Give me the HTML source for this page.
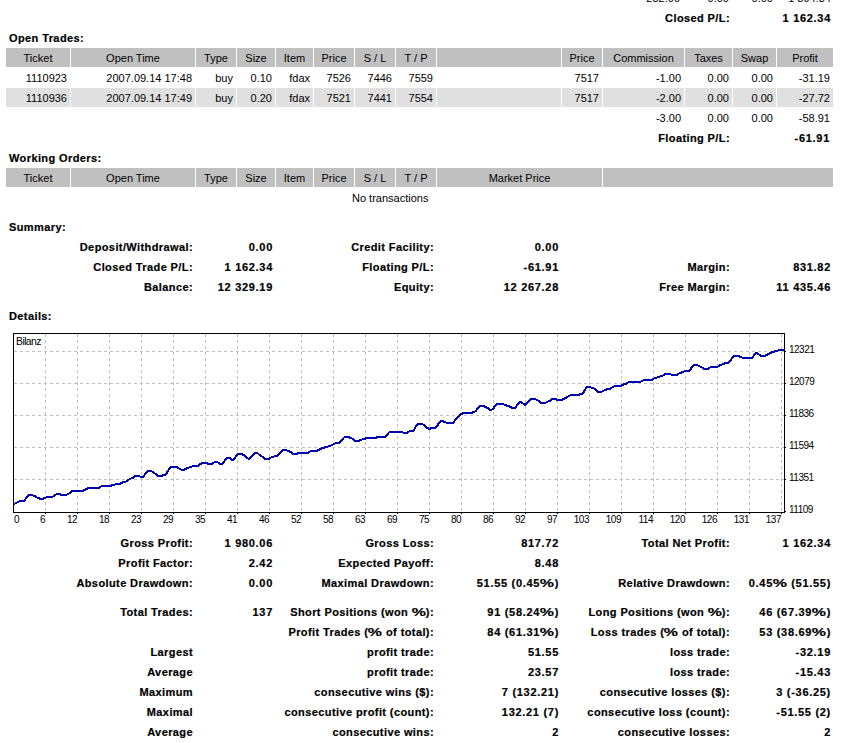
<!DOCTYPE html>
<html><head><meta charset="utf-8"><style>
html,body{margin:0;padding:0;background:#fff;}
body{width:842px;height:743px;overflow:hidden;position:relative;font-family:"Liberation Sans",sans-serif;font-size:11px;color:#000;}
.t{position:absolute;white-space:nowrap;line-height:19px;height:19px;margin-top:1px;}
.r{text-align:right;}
.c{text-align:center;}
b,.b{font-weight:bold;letter-spacing:0.4px;-webkit-text-stroke:0.2px #000;}
.n{letter-spacing:0.7px;}
table.g{position:absolute;left:5px;border-collapse:separate;border-spacing:1px;table-layout:fixed;}
table.g td{height:19px;padding:1px 3px 0 0;line-height:18px;box-sizing:border-box;white-space:nowrap;overflow:hidden;text-align:right;}
table.g tr.h td{background:#c0c0c0;text-align:center;padding:0;}
table.g tr.z td{background:#e0e0e0;}
.ch{position:absolute;left:0;top:326px;}
</style></head><body>

<div class="t r" style="left:598px;width:82px;top:-12px">-232.00</div>
<div class="t r" style="left:685px;width:44px;top:-12px">0.00</div>
<div class="t r" style="left:733px;width:40px;top:-12px">0.00</div>
<div class="t r" style="left:777px;width:54px;top:-12px">1 394.34</div>
<div class="t r b" style="left:501px;width:229px;top:8px">Closed P/L:</div>
<div class="t r b n" style="left:734px;width:97px;top:8px">1 162.34</div>
<div class="t b" style="left:9px;top:28px">Open Trades:</div>
<table class="g" style="top:47px;width:829px"><colgroup><col style="width:64px"><col style="width:124px"><col style="width:40px"><col style="width:38px"><col style="width:37px"><col style="width:40px"><col style="width:40px"><col style="width:40px"><col style="width:124px"><col style="width:40px"><col style="width:81px"><col style="width:47px"><col style="width:43px"><col style="width:56px"></colgroup>
<tr class="h"><td>Ticket</td><td>Open Time</td><td>Type</td><td>Size</td><td>Item</td><td>Price</td><td>S / L</td><td>T / P</td><td></td><td>Price</td><td>Commission</td><td>Taxes</td><td>Swap</td><td>Profit</td></tr>
<tr><td>1110923</td><td>2007.09.14 17:48</td><td>buy</td><td>0.10</td><td>fdax</td><td>7526</td><td>7446</td><td>7559</td><td></td><td>7517</td><td>-1.00</td><td>0.00</td><td>0.00</td><td>-31.19</td></tr>
<tr class="z"><td>1110936</td><td>2007.09.14 17:49</td><td>buy</td><td>0.20</td><td>fdax</td><td>7521</td><td>7441</td><td>7554</td><td></td><td>7517</td><td>-2.00</td><td>0.00</td><td>0.00</td><td>-27.72</td></tr>
<tr><td colspan="10"></td><td>-3.00</td><td>0.00</td><td>0.00</td><td>-58.91</td></tr>
<tr><td colspan="12" style="padding-right:2px"><b>Floating P/L:</b></td><td colspan="2"><b class="n">-61.91</b></td></tr>
</table>
<div class="t b" style="left:9px;top:148px">Working Orders:</div>
<table class="g" style="top:167px;width:829px"><colgroup><col style="width:64px"><col style="width:124px"><col style="width:40px"><col style="width:38px"><col style="width:37px"><col style="width:40px"><col style="width:40px"><col style="width:40px"><col style="width:165px"><col style="width:230px"></colgroup>
<tr class="h"><td>Ticket</td><td>Open Time</td><td>Type</td><td>Size</td><td>Item</td><td>Price</td><td>S / L</td><td>T / P</td><td>Market Price</td><td></td></tr>
</table>
<div class="t" style="left:352px;top:188px">No transactions</div>
<div class="t b" style="left:9px;top:217px">Summary:</div>
<div class="t r b" style="left:43px;width:150px;top:237px">Deposit/Withdrawal:</div>
<div class="t r b n" style="left:203px;width:70px;top:237px">0.00</div>
<div class="t r b" style="left:284px;width:150px;top:237px">Credit Facility:</div>
<div class="t r b n" style="left:449px;width:110px;top:237px">0.00</div>
<div class="t r b" style="left:43px;width:150px;top:257px">Closed Trade P/L:</div>
<div class="t r b n" style="left:203px;width:70px;top:257px">1 162.34</div>
<div class="t r b" style="left:284px;width:150px;top:257px">Floating P/L:</div>
<div class="t r b n" style="left:449px;width:110px;top:257px">-61.91</div>
<div class="t r b" style="left:580px;width:150px;top:257px">Margin:</div>
<div class="t r b n" style="left:741px;width:90px;top:257px">831.82</div>
<div class="t r b" style="left:43px;width:150px;top:277px">Balance:</div>
<div class="t r b n" style="left:203px;width:70px;top:277px">12 329.19</div>
<div class="t r b" style="left:284px;width:150px;top:277px">Equity:</div>
<div class="t r b n" style="left:449px;width:110px;top:277px">12 267.28</div>
<div class="t r b" style="left:580px;width:150px;top:277px">Free Margin:</div>
<div class="t r b n" style="left:741px;width:90px;top:277px">11 435.46</div>
<div class="t b" style="left:9px;top:306px">Details:</div>
<svg class="ch" width="842" height="207" viewBox="0 326 842 207" style="position:absolute;left:0;top:326px" shape-rendering="crispEdges"><line x1="14" y1="351.5" x2="784" y2="351.5" stroke="#c0c0c0" stroke-width="1" stroke-dasharray="3,3"/><line x1="14" y1="383.5" x2="784" y2="383.5" stroke="#c0c0c0" stroke-width="1" stroke-dasharray="3,3"/><line x1="14" y1="415.5" x2="784" y2="415.5" stroke="#c0c0c0" stroke-width="1" stroke-dasharray="3,3"/><line x1="14" y1="447.5" x2="784" y2="447.5" stroke="#c0c0c0" stroke-width="1" stroke-dasharray="3,3"/><line x1="14" y1="479.5" x2="784" y2="479.5" stroke="#c0c0c0" stroke-width="1" stroke-dasharray="3,3"/><line x1="45.5" y1="334" x2="45.5" y2="512" stroke="#c0c0c0" stroke-width="1" stroke-dasharray="3,3"/><line x1="77.5" y1="334" x2="77.5" y2="512" stroke="#c0c0c0" stroke-width="1" stroke-dasharray="3,3"/><line x1="109.5" y1="334" x2="109.5" y2="512" stroke="#c0c0c0" stroke-width="1" stroke-dasharray="3,3"/><line x1="141.5" y1="334" x2="141.5" y2="512" stroke="#c0c0c0" stroke-width="1" stroke-dasharray="3,3"/><line x1="173.5" y1="334" x2="173.5" y2="512" stroke="#c0c0c0" stroke-width="1" stroke-dasharray="3,3"/><line x1="205.5" y1="334" x2="205.5" y2="512" stroke="#c0c0c0" stroke-width="1" stroke-dasharray="3,3"/><line x1="237.5" y1="334" x2="237.5" y2="512" stroke="#c0c0c0" stroke-width="1" stroke-dasharray="3,3"/><line x1="269.5" y1="334" x2="269.5" y2="512" stroke="#c0c0c0" stroke-width="1" stroke-dasharray="3,3"/><line x1="301.5" y1="334" x2="301.5" y2="512" stroke="#c0c0c0" stroke-width="1" stroke-dasharray="3,3"/><line x1="333.5" y1="334" x2="333.5" y2="512" stroke="#c0c0c0" stroke-width="1" stroke-dasharray="3,3"/><line x1="365.5" y1="334" x2="365.5" y2="512" stroke="#c0c0c0" stroke-width="1" stroke-dasharray="3,3"/><line x1="397.5" y1="334" x2="397.5" y2="512" stroke="#c0c0c0" stroke-width="1" stroke-dasharray="3,3"/><line x1="429.5" y1="334" x2="429.5" y2="512" stroke="#c0c0c0" stroke-width="1" stroke-dasharray="3,3"/><line x1="461.5" y1="334" x2="461.5" y2="512" stroke="#c0c0c0" stroke-width="1" stroke-dasharray="3,3"/><line x1="493.5" y1="334" x2="493.5" y2="512" stroke="#c0c0c0" stroke-width="1" stroke-dasharray="3,3"/><line x1="525.5" y1="334" x2="525.5" y2="512" stroke="#c0c0c0" stroke-width="1" stroke-dasharray="3,3"/><line x1="557.5" y1="334" x2="557.5" y2="512" stroke="#c0c0c0" stroke-width="1" stroke-dasharray="3,3"/><line x1="589.5" y1="334" x2="589.5" y2="512" stroke="#c0c0c0" stroke-width="1" stroke-dasharray="3,3"/><line x1="621.5" y1="334" x2="621.5" y2="512" stroke="#c0c0c0" stroke-width="1" stroke-dasharray="3,3"/><line x1="653.5" y1="334" x2="653.5" y2="512" stroke="#c0c0c0" stroke-width="1" stroke-dasharray="3,3"/><line x1="685.5" y1="334" x2="685.5" y2="512" stroke="#c0c0c0" stroke-width="1" stroke-dasharray="3,3"/><line x1="717.5" y1="334" x2="717.5" y2="512" stroke="#c0c0c0" stroke-width="1" stroke-dasharray="3,3"/><line x1="749.5" y1="334" x2="749.5" y2="512" stroke="#c0c0c0" stroke-width="1" stroke-dasharray="3,3"/><line x1="781.5" y1="334" x2="781.5" y2="512" stroke="#c0c0c0" stroke-width="1" stroke-dasharray="3,3"/><rect x="13.5" y="333.5" width="771" height="179" fill="none" stroke="#000" stroke-width="1"/><line x1="785" y1="351.5" x2="786" y2="351.5" stroke="#000" stroke-width="1"/><line x1="785" y1="383.5" x2="786" y2="383.5" stroke="#000" stroke-width="1"/><line x1="785" y1="415.5" x2="786" y2="415.5" stroke="#000" stroke-width="1"/><line x1="785" y1="447.5" x2="786" y2="447.5" stroke="#000" stroke-width="1"/><line x1="785" y1="479.5" x2="786" y2="479.5" stroke="#000" stroke-width="1"/><line x1="785" y1="511.5" x2="786" y2="511.5" stroke="#000" stroke-width="1"/><line x1="45.5" y1="513" x2="45.5" y2="514" stroke="#000" stroke-width="1"/><line x1="77.5" y1="513" x2="77.5" y2="514" stroke="#000" stroke-width="1"/><line x1="109.5" y1="513" x2="109.5" y2="514" stroke="#000" stroke-width="1"/><line x1="141.5" y1="513" x2="141.5" y2="514" stroke="#000" stroke-width="1"/><line x1="173.5" y1="513" x2="173.5" y2="514" stroke="#000" stroke-width="1"/><line x1="205.5" y1="513" x2="205.5" y2="514" stroke="#000" stroke-width="1"/><line x1="237.5" y1="513" x2="237.5" y2="514" stroke="#000" stroke-width="1"/><line x1="269.5" y1="513" x2="269.5" y2="514" stroke="#000" stroke-width="1"/><line x1="301.5" y1="513" x2="301.5" y2="514" stroke="#000" stroke-width="1"/><line x1="333.5" y1="513" x2="333.5" y2="514" stroke="#000" stroke-width="1"/><line x1="365.5" y1="513" x2="365.5" y2="514" stroke="#000" stroke-width="1"/><line x1="397.5" y1="513" x2="397.5" y2="514" stroke="#000" stroke-width="1"/><line x1="429.5" y1="513" x2="429.5" y2="514" stroke="#000" stroke-width="1"/><line x1="461.5" y1="513" x2="461.5" y2="514" stroke="#000" stroke-width="1"/><line x1="493.5" y1="513" x2="493.5" y2="514" stroke="#000" stroke-width="1"/><line x1="525.5" y1="513" x2="525.5" y2="514" stroke="#000" stroke-width="1"/><line x1="557.5" y1="513" x2="557.5" y2="514" stroke="#000" stroke-width="1"/><line x1="589.5" y1="513" x2="589.5" y2="514" stroke="#000" stroke-width="1"/><line x1="621.5" y1="513" x2="621.5" y2="514" stroke="#000" stroke-width="1"/><line x1="653.5" y1="513" x2="653.5" y2="514" stroke="#000" stroke-width="1"/><line x1="685.5" y1="513" x2="685.5" y2="514" stroke="#000" stroke-width="1"/><line x1="717.5" y1="513" x2="717.5" y2="514" stroke="#000" stroke-width="1"/><line x1="749.5" y1="513" x2="749.5" y2="514" stroke="#000" stroke-width="1"/><line x1="781.5" y1="513" x2="781.5" y2="514" stroke="#000" stroke-width="1"/><polyline points="14.1,503.9 16.2,503.0 18.7,501.7 21.6,500.8 24.4,500.7 26.5,497.1 29.0,495.0 31.9,495.0 34.4,496.0 37.2,497.5 40.1,498.9 42.9,498.9 45.1,497.7 47.2,497.0 52.2,497.0 55.8,494.6 59.3,493.9 61.5,495.0 65.7,495.0 68.6,493.7 72.9,490.7 83.0,490.8 86.9,488.9 89.0,487.8 99.4,487.8 101.5,486.0 110.8,486.0 112.9,484.8 120.0,483.9 122.9,482.1 126.5,481.4 128.6,479.6 132.9,477.8 134.8,475.8 139.1,475.8 140.1,476.7 143.3,476.7 145.8,472.8 148.0,470.8 150.5,470.8 153.0,472.1 155.8,473.9 158.0,475.7 162.2,475.7 163.6,474.6 165.8,474.6 167.9,471.0 170.1,467.8 171.8,466.8 176.5,466.8 178.6,468.2 181.5,469.8 184.3,469.8 185.7,468.9 187.9,468.0 190.7,466.8 194.1,465.8 198.0,465.8 200.1,464.2 203.0,462.8 207.3,462.8 208.3,463.9 212.2,463.9 214.4,462.1 217.6,462.1 220.1,463.9 222.6,463.9 225.1,460.0 227.2,457.8 229.7,457.8 231.8,459.8 233.6,459.8 235.8,456.4 237.9,453.9 241.5,453.9 243.6,455.0 247.2,458.2 249.7,458.9 253.0,454.6 255.1,452.8 257.3,452.8 259.4,454.8 262.3,456.7 264.8,458.9 269.0,458.9 270.1,457.8 273.0,457.0 275.1,455.8 277.2,455.8 280.1,452.8 282.9,450.0 286.1,450.0 287.9,450.8 290.4,451.8 292.6,453.9 297.2,453.9 298.3,452.8 307.9,452.8 309.3,451.8 313.0,450.7 317.3,450.8 320.1,448.9 327.3,446.7 332.2,445.0 336.5,442.8 339.4,442.8 342.2,439.6 344.7,436.8 348.6,436.8 350.1,437.8 352.9,438.9 355.1,440.8 359.3,440.8 360.8,439.8 365.0,438.9 366.1,437.8 373.0,437.8 375.9,437.8 376.9,436.7 385.1,436.7 387.3,434.6 389.7,431.7 393.3,431.7 407.2,432.8 408.6,431.7 410.8,430.8 413.6,430.8 415.0,427.8 417.5,423.9 421.5,423.9 424.3,425.0 427.2,427.8 429.3,428.9 433.0,427.8 435.1,427.8 437.3,425.7 439.4,422.1 441.2,421.0 443.3,421.0 444.4,422.0 446.5,422.8 453.3,422.8 455.8,418.9 458.7,416.0 461.5,413.9 464.4,412.8 471.8,412.8 472.9,411.8 475.8,411.4 477.9,407.8 480.0,406.1 483.6,406.1 485.7,407.1 488.2,408.2 490.0,410.0 493.0,409.3 494.8,405.7 496.9,403.9 503.0,403.9 505.1,405.0 507.3,405.8 510.1,406.7 512.2,408.0 515.1,408.0 517.2,405.0 520.1,401.7 522.9,403.5 525.4,405.0 527.9,402.5 530.8,398.9 534.3,398.9 536.5,399.8 539.3,401.0 541.1,402.8 545.4,402.8 547.2,401.7 550.0,400.7 552.2,398.5 555.9,398.9 557.3,399.9 562.3,399.9 563.3,398.9 565.8,398.0 569.0,395.8 571.5,394.8 579.0,394.8 580.1,393.9 582.9,393.5 584.4,390.8 586.9,387.1 590.4,387.1 591.5,387.8 593.6,388.2 595.8,390.0 597.9,391.9 601.5,391.9 602.9,390.8 605.7,389.8 607.9,388.9 610.0,388.9 613.0,386.8 615.5,385.8 620.8,385.8 622.3,384.8 625.8,383.9 629.4,381.7 640.8,381.7 642.2,380.7 645.1,379.8 652.2,379.8 653.6,378.7 655.8,377.8 659.3,376.7 662.9,375.7 665.4,373.9 669.3,373.9 673.0,375.0 676.9,375.0 678.0,373.9 680.8,372.8 683.7,371.7 686.5,370.8 689.4,370.8 691.5,367.8 693.7,365.0 697.2,365.0 698.3,365.8 700.8,366.7 704.4,368.9 708.3,368.9 709.4,367.8 711.8,366.9 717.2,366.9 720.8,364.8 724.3,363.9 725.7,362.8 728.6,362.8 730.7,360.0 733.7,356.0 738.7,356.0 740.1,357.0 743.0,357.8 752.2,357.8 754.4,354.6 756.5,352.8 758.3,353.9 760.8,355.8 765.1,355.8 766.5,354.8 769.3,353.9 770.8,352.8 773.6,351.8 777.2,350.7 780.7,349.6 784.0,349.6" fill="none" stroke="#0000b0" stroke-width="2" stroke-linejoin="round" shape-rendering="crispEdges"/></svg>
<div class="t" style="left:16px;top:331px;font-size:10.5px;letter-spacing:-0.6px">Bilanz</div>
<div class="t" style="left:789px;top:339px;font-size:10px;letter-spacing:-0.5px">12321</div>
<div class="t" style="left:789px;top:371px;font-size:10px;letter-spacing:-0.5px">12079</div>
<div class="t" style="left:789px;top:403px;font-size:10px;letter-spacing:-0.5px">11836</div>
<div class="t" style="left:789px;top:435px;font-size:10px;letter-spacing:-0.5px">11594</div>
<div class="t" style="left:789px;top:467px;font-size:10px;letter-spacing:-0.5px">11351</div>
<div class="t" style="left:789px;top:499px;font-size:10px;letter-spacing:-0.5px">11109</div>
<div class="t" style="left:14px;top:509px;font-size:10px">0</div>
<div class="t r" style="left:5px;width:40px;top:509px;font-size:10px;letter-spacing:-0.5px">6</div>
<div class="t r" style="left:37px;width:40px;top:509px;font-size:10px;letter-spacing:-0.5px">12</div>
<div class="t r" style="left:69px;width:40px;top:509px;font-size:10px;letter-spacing:-0.5px">18</div>
<div class="t r" style="left:101px;width:40px;top:509px;font-size:10px;letter-spacing:-0.5px">23</div>
<div class="t r" style="left:133px;width:40px;top:509px;font-size:10px;letter-spacing:-0.5px">29</div>
<div class="t r" style="left:165px;width:40px;top:509px;font-size:10px;letter-spacing:-0.5px">35</div>
<div class="t r" style="left:197px;width:40px;top:509px;font-size:10px;letter-spacing:-0.5px">41</div>
<div class="t r" style="left:229px;width:40px;top:509px;font-size:10px;letter-spacing:-0.5px">46</div>
<div class="t r" style="left:261px;width:40px;top:509px;font-size:10px;letter-spacing:-0.5px">52</div>
<div class="t r" style="left:293px;width:40px;top:509px;font-size:10px;letter-spacing:-0.5px">58</div>
<div class="t r" style="left:325px;width:40px;top:509px;font-size:10px;letter-spacing:-0.5px">63</div>
<div class="t r" style="left:357px;width:40px;top:509px;font-size:10px;letter-spacing:-0.5px">69</div>
<div class="t r" style="left:389px;width:40px;top:509px;font-size:10px;letter-spacing:-0.5px">75</div>
<div class="t r" style="left:421px;width:40px;top:509px;font-size:10px;letter-spacing:-0.5px">80</div>
<div class="t r" style="left:453px;width:40px;top:509px;font-size:10px;letter-spacing:-0.5px">86</div>
<div class="t r" style="left:485px;width:40px;top:509px;font-size:10px;letter-spacing:-0.5px">92</div>
<div class="t r" style="left:517px;width:40px;top:509px;font-size:10px;letter-spacing:-0.5px">97</div>
<div class="t r" style="left:549px;width:40px;top:509px;font-size:10px;letter-spacing:-0.5px">103</div>
<div class="t r" style="left:581px;width:40px;top:509px;font-size:10px;letter-spacing:-0.5px">109</div>
<div class="t r" style="left:613px;width:40px;top:509px;font-size:10px;letter-spacing:-0.5px">114</div>
<div class="t r" style="left:645px;width:40px;top:509px;font-size:10px;letter-spacing:-0.5px">120</div>
<div class="t r" style="left:677px;width:40px;top:509px;font-size:10px;letter-spacing:-0.5px">126</div>
<div class="t r" style="left:709px;width:40px;top:509px;font-size:10px;letter-spacing:-0.5px">131</div>
<div class="t r" style="left:741px;width:40px;top:509px;font-size:10px;letter-spacing:-0.5px">137</div>
<div class="t r b" style="left:43px;width:150px;top:533px">Gross Profit:</div>
<div class="t r b n" style="left:203px;width:70px;top:533px">1 980.06</div>
<div class="t r b" style="left:284px;width:150px;top:533px">Gross Loss:</div>
<div class="t r b n" style="left:449px;width:110px;top:533px">817.72</div>
<div class="t r b" style="left:580px;width:150px;top:533px">Total Net Profit:</div>
<div class="t r b n" style="left:741px;width:90px;top:533px">1 162.34</div>
<div class="t r b" style="left:43px;width:150px;top:553px">Profit Factor:</div>
<div class="t r b n" style="left:203px;width:70px;top:553px">2.42</div>
<div class="t r b" style="left:284px;width:150px;top:553px">Expected Payoff:</div>
<div class="t r b n" style="left:449px;width:110px;top:553px">8.48</div>
<div class="t r b" style="left:43px;width:150px;top:573px">Absolute Drawdown:</div>
<div class="t r b n" style="left:203px;width:70px;top:573px">0.00</div>
<div class="t r b" style="left:284px;width:150px;top:573px">Maximal Drawdown:</div>
<div class="t r b n" style="left:449px;width:110px;top:573px">51.55 (0.45<span style="display:inline-block;margin:0 2px;transform:scaleX(1.45)">%</span>)</div>
<div class="t r b" style="left:580px;width:150px;top:573px">Relative Drawdown:</div>
<div class="t r b n" style="left:741px;width:90px;top:573px">0.45<span style="display:inline-block;margin:0 2px;transform:scaleX(1.45)">%</span> (51.55)</div>
<div class="t r b" style="left:43px;width:150px;top:602px">Total Trades:</div>
<div class="t r b n" style="left:203px;width:70px;top:602px">137</div>
<div class="t r b" style="left:284px;width:150px;top:602px">Short Positions (won <span style="display:inline-block;margin:0 2px;transform:scaleX(1.45)">%</span>):</div>
<div class="t r b n" style="left:449px;width:110px;top:602px">91 (58.24<span style="display:inline-block;margin:0 2px;transform:scaleX(1.45)">%</span>)</div>
<div class="t r b" style="left:580px;width:150px;top:602px">Long Positions (won <span style="display:inline-block;margin:0 2px;transform:scaleX(1.45)">%</span>):</div>
<div class="t r b n" style="left:741px;width:90px;top:602px">46 (67.39<span style="display:inline-block;margin:0 2px;transform:scaleX(1.45)">%</span>)</div>
<div class="t r b" style="left:284px;width:150px;top:622px">Profit Trades (<span style="display:inline-block;margin:0 2px;transform:scaleX(1.45)">%</span> of total):</div>
<div class="t r b n" style="left:449px;width:110px;top:622px">84 (61.31<span style="display:inline-block;margin:0 2px;transform:scaleX(1.45)">%</span>)</div>
<div class="t r b" style="left:580px;width:150px;top:622px">Loss trades (<span style="display:inline-block;margin:0 2px;transform:scaleX(1.45)">%</span> of total):</div>
<div class="t r b n" style="left:741px;width:90px;top:622px">53 (38.69<span style="display:inline-block;margin:0 2px;transform:scaleX(1.45)">%</span>)</div>
<div class="t r b" style="left:43px;width:150px;top:642px">Largest</div>
<div class="t r b" style="left:284px;width:150px;top:642px">profit trade:</div>
<div class="t r b n" style="left:449px;width:110px;top:642px">51.55</div>
<div class="t r b" style="left:580px;width:150px;top:642px">loss trade:</div>
<div class="t r b n" style="left:741px;width:90px;top:642px">-32.19</div>
<div class="t r b" style="left:43px;width:150px;top:662px">Average</div>
<div class="t r b" style="left:284px;width:150px;top:662px">profit trade:</div>
<div class="t r b n" style="left:449px;width:110px;top:662px">23.57</div>
<div class="t r b" style="left:580px;width:150px;top:662px">loss trade:</div>
<div class="t r b n" style="left:741px;width:90px;top:662px">-15.43</div>
<div class="t r b" style="left:43px;width:150px;top:682px">Maximum</div>
<div class="t r b" style="left:284px;width:150px;top:682px">consecutive wins ($):</div>
<div class="t r b n" style="left:449px;width:110px;top:682px">7 (132.21)</div>
<div class="t r b" style="left:580px;width:150px;top:682px">consecutive losses ($):</div>
<div class="t r b n" style="left:741px;width:90px;top:682px">3 (-36.25)</div>
<div class="t r b" style="left:43px;width:150px;top:702px">Maximal</div>
<div class="t r b" style="left:284px;width:150px;top:702px">consecutive profit (count):</div>
<div class="t r b n" style="left:449px;width:110px;top:702px">132.21 (7)</div>
<div class="t r b" style="left:580px;width:150px;top:702px">consecutive loss (count):</div>
<div class="t r b n" style="left:741px;width:90px;top:702px">-51.55 (2)</div>
<div class="t r b" style="left:43px;width:150px;top:722px">Average</div>
<div class="t r b" style="left:284px;width:150px;top:722px">consecutive wins:</div>
<div class="t r b n" style="left:449px;width:110px;top:722px">2</div>
<div class="t r b" style="left:580px;width:150px;top:722px">consecutive losses:</div>
<div class="t r b n" style="left:741px;width:90px;top:722px">2</div>
</body></html>
